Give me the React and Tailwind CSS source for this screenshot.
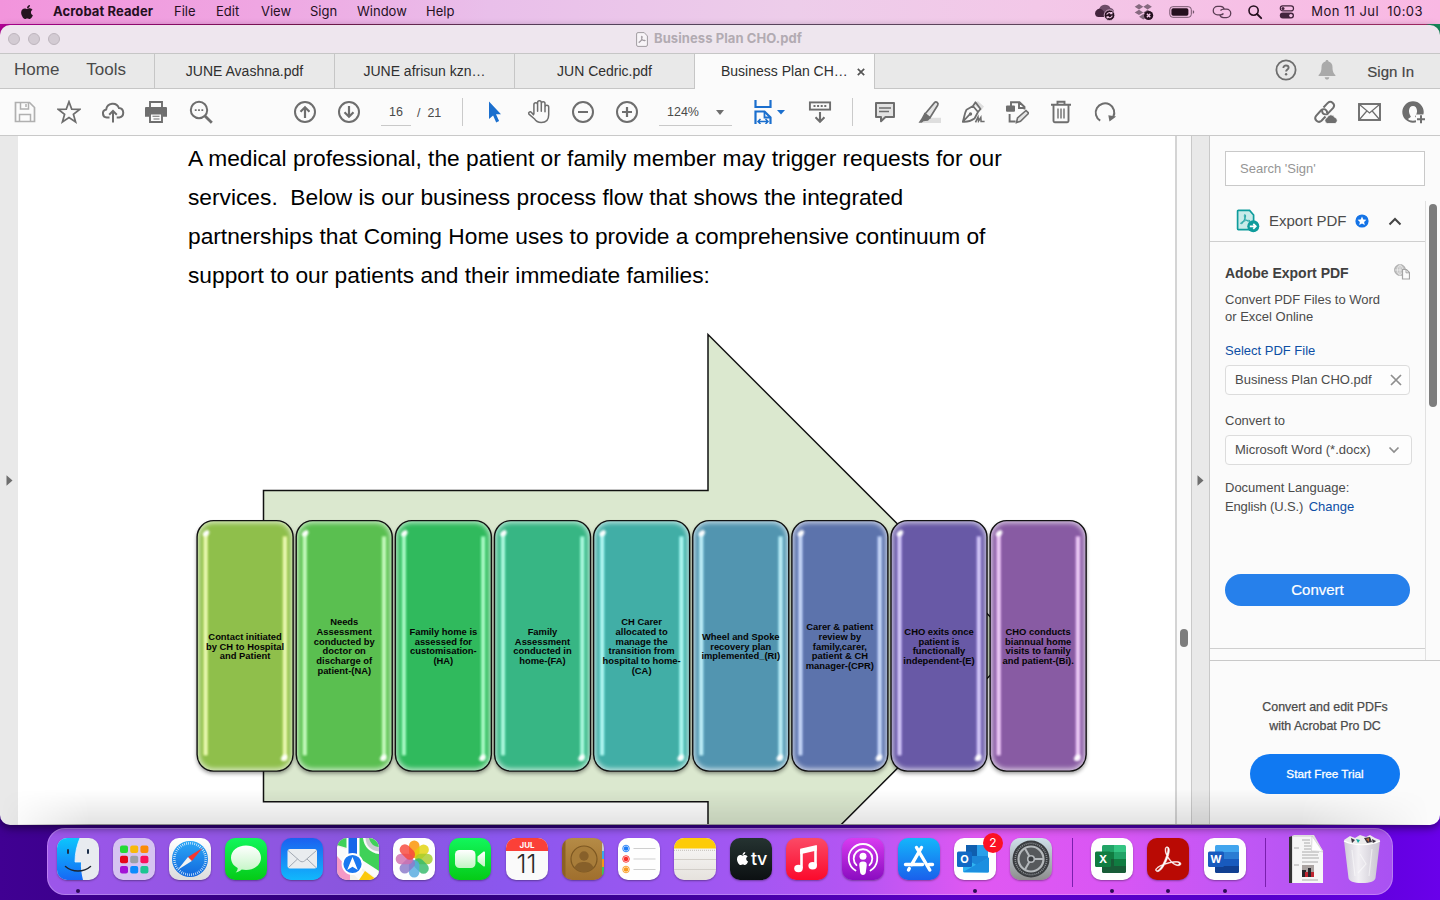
import React from "react";
import { FaApple } from "react-icons/fa";

const G = "#6e6e6e";

function Svg({ size = 24, w, h, vb = "0 0 24 24", children, className = "" }) {
  return (
    <svg width={w || size} height={h || size} viewBox={vb} fill="none" className={"shrink-0 " + className}>
      {children}
    </svg>
  );
}

const ACRO =
  "M23.63 15.3c-.71-.745-2.166-1.17-4.224-1.17-1.1 0-2.377.106-3.761.354a19.443 19.443 0 0 1-2.307-2.661c-.532-.71-.994-1.49-1.42-2.236.817-2.484 1.207-4.507 1.207-5.962 0-1.632-.603-3.336-2.342-3.336-.532 0-1.065.32-1.349.781-.78 1.384-.425 4.4.923 7.381a60.277 60.277 0 0 1-1.703 4.507c-.568 1.349-1.207 2.733-1.917 4.01C2.834 18.53.314 20.34.03 21.758c-.106.533.071 1.03.462 1.42.142.107.639.533 1.49.533 2.59 0 5.323-4.188 6.707-6.707 1.065-.355 2.13-.71 3.194-.994a34.963 34.963 0 0 1 3.407-.745c2.732 2.448 5.145 2.839 6.352 2.839 1.49 0 2.023-.604 2.2-1.1.32-.64.106-1.349-.213-1.704zm-1.42 1.03c-.107.532-.64.887-1.384.887-.213 0-.39-.036-.604-.071-1.348-.32-2.626-.994-3.903-2.059a17.717 17.717 0 0 1 2.98-.248c.746 0 1.385.035 1.81.142.497.106 1.278.426 1.1 1.348zm-7.524-1.668a38.01 38.01 0 0 0-2.945.674 39.68 39.68 0 0 0-2.52.745 40.05 40.05 0 0 0 1.207-2.555c.426-.994.78-2.023 1.136-2.981.354.603.745 1.207 1.135 1.739a50.127 50.127 0 0 0 1.987 2.378zM10.038 1.46a.768.768 0 0 1 .674-.425c.745 0 .887.851.887 1.526 0 1.135-.355 2.874-.958 4.861-1.03-2.768-1.1-5.074-.603-5.962zM6.134 17.997c-1.81 2.981-3.549 4.826-4.613 4.826a.872.872 0 0 1-.532-.177c-.213-.213-.32-.461-.249-.745.213-1.065 2.271-2.555 5.394-3.904Z";

/* ---------- menu bar ---------- */

function MenuBar() {
  return (
    <div className="flex h-6 w-full shrink-0 items-center bg-[linear-gradient(90deg,#f294dc_0%,#efa6e2_18%,#e9bfea_34%,#edcdea_55%,#f3c8e8_72%,#f9b8e3_100%)] text-[13px] text-[#25101f]">
      <span className="flex w-[53px] shrink-0 justify-center">
        <FaApple size={16} className="text-[#25151f]" />
      </span>
      <span className="w-[121px] font-bold tracking-[0.1px]">Acrobat Reader</span>
      <span className="w-[42px]">File</span>
      <span className="w-[45px]">Edit</span>
      <span className="w-[49px]">View</span>
      <span className="w-[47px]">Sign</span>
      <span className="w-[69px]">Window</span>
      <span>Help</span>
      <span className="ml-auto flex items-center">
        <Svg w={22} h={18} vb="0 0 22 18" className="mr-[18px]">
          <path d="M6 14a4.5 4.5 0 0 1-.6-8.6A6.2 6.2 0 0 1 16.500 5A4.500 4.500 0 0 1 20 9.500c0 3-2 4.500-4.500 4.500Z" fill="#6d4d68" />
          <path d="M1 10.500A4.500 4.500 0 0 1 8 6.600L15 14H5.400A4 4 0 0 1 1 10.500Z" fill="#43243d" />
          <circle cx="15.500" cy="12.200" r="5.300" fill="#25101f" stroke="#f3c8e8" strokeWidth=".8" />
          <path d="M12.700 11.700a3 3 0 0 1 5-1.200M18.300 12.700a3 3 0 0 1-5 1.200M17.900 8.900v1.800h-1.800M13.100 15.500v-1.800h1.800" stroke="#f3c8e8" strokeWidth="1.100" />
        </Svg>
        <Svg w={20} h={18} vb="0 0 20 18" className="mr-[15px]">
          <g fill="#85697f">
            <path d="m5 1 4.300 2.700L5 6.400.7 3.700ZM13.600 1l4.300 2.700-4.300 2.700-4.300-2.700ZM5 6.700l4.300 2.700L5 12.100.7 9.400ZM13.600 6.700l4.300 2.700-4.300 2.700-4.300-2.700ZM9.300 11l4.200 2.700-4.200 2.700-4.200-2.700Z" />
          </g>
          <circle cx="14.600" cy="12.500" r="4.600" fill="#25101f" />
          <path d="m12.900 10.800 3.400 3.400m0-3.400-3.400 3.400" stroke="#f3c8e8" strokeWidth="1.400" />
        </Svg>
        <Svg w={26} h={12} vb="0 0 26 12" className="mr-[17px]">
          <rect x=".8" y=".7" width="21.500" height="10.600" rx="3" stroke="#75566d" strokeWidth="1" />
          <rect x="2.400" y="2.300" width="17" height="7.400" rx="1.700" fill="#25101f" />
          <path d="M23.800 4.200c1 .3 1.400 1 1.400 1.800s-.4 1.500-1.400 1.800Z" fill="#75566d" />
        </Svg>
        <Svg w={20} h={14} vb="0 0 20 14" className="mr-[15px]">
          <path d="M11.500 8.500c-.8 1-2 1.400-3.400 1.400H5.500a4.200 4.200 0 0 1 0-8.500h3a4.200 4.200 0 0 1 3.900 3.200M8.500 5.500c.8-1 2-1.400 3.400-1.400h2.600a4.200 4.200 0 0 1 0 8.500h-3a4.200 4.200 0 0 1-3.900-3.200" stroke="#5b3d54" strokeWidth="1.300" />
        </Svg>
        <Svg w={16} h={16} vb="0 0 16 16" className="mr-[16px]">
          <circle cx="6.600" cy="6.600" r="4.600" stroke="#25101f" strokeWidth="1.600" />
          <path d="m10 10 4.200 4.200" stroke="#25101f" strokeWidth="1.900" strokeLinecap="round" />
        </Svg>
        <Svg w={16} h={14} vb="0 0 16 14" className="mr-[16px]">
          <rect x="1.300" y=".9" width="13.200" height="5" rx="2.500" stroke="#43243d" strokeWidth="1.200" />
          <circle cx="4" cy="3.400" r="1.500" fill="#43243d" />
          <rect x=".8" y="7.600" width="14.200" height="6" rx="3" fill="#43243d" />
          <circle cx="11.900" cy="10.600" r="1.700" fill="#f5c0e6" />
        </Svg>
        <span className="mr-[17px] whitespace-pre tracking-[0.450px]">Mon 11 Jul  10:03</span>
      </span>
    </div>
  );
}

/* ---------- window chrome ---------- */

function TitleBar() {
  return (
    <div className="flex h-7 shrink-0 items-center bg-[#eee6ee]">
      <div className="flex w-[200px] gap-2 pl-2">
        <i className="size-3 rounded-full border border-[#bdb5bd] bg-[#d3cbd3]" />
        <i className="size-3 rounded-full border border-[#bdb5bd] bg-[#d3cbd3]" />
        <i className="size-3 rounded-full border border-[#bdb5bd] bg-[#d3cbd3]" />
      </div>
      <div className="flex flex-1 items-center justify-center gap-[6px] pr-[202px]">
        <Svg w={12} h={15} vb="0 0 12 15">
          <path d="M2 .6h6.200L11.400 4v9a1.400 1.400 0 0 1-1.400 1.400H2A1.400 1.400 0 0 1 .6 13V2A1.400 1.400 0 0 1 2 .6Z" fill="#f8f4f8" stroke="#a29ca2" />
          <path d={ACRO} transform="translate(2.700 4) scale(.28)" fill="#8d878d" stroke="#8d878d" strokeWidth="1" />
        </Svg>
        <span className="text-[13px] font-bold tracking-[0.080px] text-[#b2abb2]">Business Plan CHO.pdf</span>
      </div>
    </div>
  );
}

function Tab({ children }) {
  return (
    <div className="flex w-[180px] items-center justify-center border-b border-l border-[#c6c6c6] text-[14px] text-[#2f2f2f]">
      {children}
    </div>
  );
}

function TabRow() {
  return (
    <div className="flex h-9 shrink-0 border-t border-[#c6c6c6] bg-[#e9e9e9] font-['Liberation_Sans',Arial,sans-serif]">
      <div className="flex w-[154px] gap-[27px] border-b border-[#c6c6c6] pt-[4px] pl-[14px] text-[17px] leading-6 text-[#4a4a4a]">
        <span>Home</span>
        <span>Tools</span>
      </div>
      <Tab>JUNE Avashna.pdf</Tab>
      <Tab>JUNE afrisun kzn…</Tab>
      <Tab>JUN Cedric.pdf</Tab>
      <div className="flex w-[181px] items-center border-x border-[#c6c6c6] bg-[#fbfbfb] pl-[26px] text-[14px] text-[#2f2f2f]">
        <span className="w-[136px]">Business Plan CH…</span>
        <Svg size={8} vb="0 0 8 8">
          <path d="m.8.8 6.400 6.400M7.200.8.8 7.200" stroke="#555" strokeWidth="1.700" />
        </Svg>
      </div>
      <div className="flex flex-1 items-center justify-end border-b border-[#c6c6c6] pr-[26px]">
        <Svg size={22} vb="0 0 22 22" className="mr-[21px] -mt-[3px]">
          <circle cx="11" cy="11" r="9.600" stroke={G} strokeWidth="1.800" />
          <path d="M8.400 8.900c0-1.500 1.100-2.400 2.600-2.400s2.600.9 2.600 2.200c0 1.900-2.500 1.900-2.500 3.900" stroke={G} strokeWidth="1.900" />
          <circle cx="11.100" cy="15.200" r="1.200" fill={G} />
        </Svg>
        <Svg w={18} h={20} vb="0 0 18 20" className="mr-[31px] -mt-[2px]">
          <path d="M9 0c.9 0 1.500.6 1.500 1.500 2.600.6 4 2.700 4 5.500 0 4.800 1.200 6.500 2.900 8v1H.6v-1c1.700-1.500 2.900-3.200 2.900-8 0-2.800 1.400-4.900 4-5.500C7.500.6 8.100 0 9 0ZM6.700 17.300h4.600C11.100 18.800 10.200 19.600 9 19.600s-2.100-.8-2.300-2.300Z" fill="#aaa" />
        </Svg>
        <span className="mt-[2px] text-[15px] text-[#454545] [-webkit-text-stroke:0.200px_#454545]">Sign In</span>
      </div>
    </div>
  );
}

function Slot({ children }) {
  return <div className="flex w-11 shrink-0 items-center justify-center">{children}</div>;
}

function Toolbar() {
  return (
    <div className="flex h-[47px] shrink-0 items-center border-b border-[#c9c9c9] bg-[#fbfbfb] pl-[3px] font-['Liberation_Sans',Arial,sans-serif] text-[13px] text-[#4a4a4a]">
      <Slot>
        <Svg>
          <path d="M3 3h14l5 5v14H3Z" transform="translate(-.5 -.5)" stroke="#b0b0b0" strokeWidth="1.700" />
          <path d="M7.500 3v6h8V3M6.500 21v-6.500h11V21M13 4v3" stroke="#b0b0b0" strokeWidth="1.500" />
        </Svg>
      </Slot>
      <Slot>
        <Svg>
          <path d="m12 1.700 2.700 7.400 7.900.3-6.200 4.900 2.200 7.600L12 17.500l-6.600 4.400 2.200-7.600-6.200-4.900 7.900-.3Z" stroke={G} strokeWidth="1.700" />
        </Svg>
      </Slot>
      <Slot>
        <Svg>
          <path d="M8.500 17.500H5.700a4.100 4.100 0 0 1-.5-8.100A6.600 6.600 0 0 1 17.900 8a4.800 4.800 0 0 1 .4 9.500h-2.600" stroke={G} strokeWidth="2" />
          <path d="M12 22.500V11m-3.800 3.700L12 10.900l3.800 3.800" stroke={G} strokeWidth="2" />
        </Svg>
      </Slot>
      <Slot>
        <Svg className="-ml-[2px]">
          <path d="M6 7.500V2h12v5.500" stroke={G} strokeWidth="1.900" />
          <path d="M2 7h20a1 1 0 0 1 1 1v8.800h-4.200V13H5.200v3.800H1V8a1 1 0 0 1 1-1Z" fill={G} />
          <path d="M6 13.500h12V22H6Z" fill="#fbfbfb" stroke={G} strokeWidth="1.900" />
          <path d="M8.500 16.200h7m-6 2.800h6" stroke={G} strokeWidth="1.100" />
        </Svg>
      </Slot>
      <Slot>
        <Svg>
          <circle cx="10" cy="10" r="8.200" stroke={G} strokeWidth="2" />
          <path d="m16 16 6.800 6.800" stroke={G} strokeWidth="2.800" />
          <path d="M5.800 9.200h1.800v1.800H5.800Zm3.300 0h1.800v1.800H9.100Zm3.300 0h1.800v1.800h-1.800Z" fill={G} />
        </Svg>
      </Slot>
      <div className="w-[60px] shrink-0" />
      <Slot>
        <Svg>
          <circle cx="12" cy="12" r="10" stroke={G} strokeWidth="2" />
          <path d="M12 18V7m-4.500 4.700L12 7.200l4.500 4.500" stroke={G} strokeWidth="2.200" />
        </Svg>
      </Slot>
      <Slot>
        <Svg>
          <circle cx="12" cy="12" r="10" stroke={G} strokeWidth="2" />
          <path d="M12 6v11m-4.500-4.700 4.500 4.500 4.500-4.500" stroke={G} strokeWidth="2.200" />
        </Svg>
      </Slot>
      <div className="mt-[1px] ml-[10px] h-[27px] w-[30px] border-b border-[#c9c9c9] text-center text-[12.500px] leading-[26px]">16</div>
      <div className="mt-[2px] ml-[6px] w-[45px] whitespace-pre text-[12.500px]">/  21</div>
      <div className="mr-[10px] h-7 w-px bg-[#cacaca]" />
      <Slot>
        <Svg>
          <path d="M6 1.500 18 14.300h-5l3.100 6.800-2.900 1.300-3.100-6.900L6 19Z" fill="#1b6fce" />
        </Svg>
      </Slot>
      <Slot>
        <Svg>
          <path d="M6.600 14.500V5a1.850 1.850 0 0 1 3.700 0v6.500V3a1.850 1.850 0 0 1 3.700 0v8.500V4a1.850 1.850 0 0 1 3.700 0v8V7.500a1.850 1.850 0 0 1 3.700 0V15c0 5-3 7.800-7.400 7.800-3.500 0-5.500-1.200-7-3.800L1.600 14.400c-1-1.800 1.200-3.200 2.600-1.700l2.400 2.900" stroke={G} strokeWidth="1.500" strokeLinejoin="round" transform="translate(.3 -.3)" />
        </Svg>
      </Slot>
      <Slot>
        <Svg>
          <circle cx="12" cy="12" r="10" stroke={G} strokeWidth="2" />
          <path d="M7 12h10" stroke={G} strokeWidth="2.200" />
        </Svg>
      </Slot>
      <Slot>
        <Svg>
          <circle cx="12" cy="12" r="10" stroke={G} strokeWidth="2" />
          <path d="M7 12h10M12 7v10" stroke={G} strokeWidth="2.200" />
        </Svg>
      </Slot>
      <div className="mt-[1px] ml-[10px] flex h-[27px] w-[73px] items-start justify-between border-b border-[#c9c9c9] pr-[8px] pl-[8px] text-[12.500px] leading-[26px]">
        124%
        <Svg w={8} h={5} vb="0 0 8 5" className="mt-[11px]">
          <path d="M0 0h8L4 5Z" fill={G} />
        </Svg>
      </div>
      <div className="flex w-[66px] shrink-0 items-center justify-center gap-[4px] pl-[8px]">
        <Svg w={20} h={24} vb="0 0 20 24">
          <g stroke="#1b6fce" strokeWidth="2.200">
            <path d="M2.500 0v7h15V0M2.500 24V11.500h9l6 6V24" />
            <path d="M11.500 11.500v6h6" strokeWidth="1.800" />
            <path d="M5 21.500h10M7.500 19 5 21.500 7.500 24m5-5 2.500 2.500-2.500 2.500" strokeWidth="1.500" />
          </g>
        </Svg>
        <Svg w={8} h={5} vb="0 0 8 5">
          <path d="M0 0h8L4 4.600Z" fill="#1b6fce" />
        </Svg>
      </div>
      <Slot>
        <Svg>
          <rect x="1.900" y="2.400" width="20.200" height="7.200" stroke={G} strokeWidth="1.900" />
          <path d="M5.500 6h13" stroke={G} strokeWidth="2" strokeDasharray="2 1.600" />
          <path d="M12 12v10m-4.500-4.700L12 21.800l4.500-4.500" stroke={G} strokeWidth="2.100" />
        </Svg>
      </Slot>
      <div className="mx-[10px] h-7 w-px bg-[#cacaca]" />
      <Slot>
        <Svg>
          <path d="M3 3h18v14h-8.500L8 21.300V17H3Z" fill="#e3e3e3" stroke={G} strokeWidth="2" strokeLinejoin="round" />
          <path d="M6 8h12M6 11.500h10" stroke={G} strokeWidth="1.500" />
        </Svg>
      </Slot>
      <Slot>
        <Svg>
          <path d="M6 17.800h18V23H5Z" fill="#dedede" />
          <path d="m8 14 9.500-11.400c1.700-1.700 4.500.5 3.200 2.600L12.800 18Z" fill="#e3e3e3" stroke={G} strokeWidth="1.700" />
          <path d="m7.600 12.400 6.400 5-3 3.300-4.500.5-1.700 1.500H1.500l3.200-4.600Z" fill={G} />
        </Svg>
      </Slot>
      <Slot>
        <Svg>
          <path d="m13.500 5 3.200-4 6.300 5.500-3 4Z" fill="#dedede" />
          <path d="M14.500 2.300 12 6 5.500 9.700C3.500 13 3.500 17 1.800 21.800c5 .4 8.500-1 11.700-3.300L17 12l2.500-3Z M12 6l5 6M2 21.500l6.500-6.800" stroke={G} strokeWidth="1.800" strokeLinejoin="round" />
          <circle cx="9.500" cy="14" r="1.700" fill={G} />
          <path d="M14.500 22.300 17 17l.5 4 2.300-3.500.3 4h3.500" stroke={G} strokeWidth="1.600" />
        </Svg>
      </Slot>
      <Slot>
        <Svg>
          <path d="M6 6V2.200h8.500L19.500 7v2.500M14 2.200V8h5.500" stroke={G} strokeWidth="1.900" />
          <rect x="1" y="5.500" width="9" height="6.200" rx="1" fill={G} />
          <path d="M4.600 14v7.500h6" stroke={G} strokeWidth="1.900" />
          <path d="M11.500 22.500 12.500 18 21 10.500l2.700 2.700-8.200 8.100Z" fill="#e3e3e3" stroke={G} strokeWidth="1.600" />
        </Svg>
      </Slot>
      <Slot>
        <Svg>
          <path d="M4.500 5.500V21a1.200 1.200 0 0 0 1.200 1.200h12.600a1.200 1.200 0 0 0 1.200-1.200V5.500M2 4.700h20M8.500 4V1.800h7V4" stroke={G} strokeWidth="1.900" />
          <path d="M9 8.500v10M12 8.500v10M15 8.500v10" stroke={G} strokeWidth="1.400" />
        </Svg>
      </Slot>
      <Slot>
        <Svg>
          <path d="M7.200 20.600A9.300 9.300 0 1 1 20.200 17" stroke={G} strokeWidth="2" />
          <path d="M15.300 15.200 23.200 16.500l-6.700 5Z" fill={G} />
        </Svg>
      </Slot>
      <div className="ml-auto flex pr-[5px]">
        <Slot>
          <Svg size={25} vb="0 0 25 25">
            <g stroke={G} strokeWidth="2">
              <path d="m10.500 7.500 4.300-4.600a3.700 3.700 0 0 1 5.400 5L15 13.400a3.700 3.700 0 0 1-5.200-.2 3.700 3.700 0 0 1-.4-3.200" />
              <path d="m12.500 16.500-4 4.300a3.700 3.700 0 0 1-5.400-5l5-5.500a3.700 3.700 0 0 1 5.200.1c.7.800 1 2 .6 3" />
            </g>
            <path d="M14.500 23.500a3 3 0 0 1-.4-5.900 4 4 0 0 1 7.500-.3 3.200 3.200 0 0 1 .5 6.200Z" fill={G} stroke="#fbfbfb" strokeWidth=".8" />
          </Svg>
        </Slot>
        <Slot>
          <Svg>
            <rect x="2" y="4" width="21" height="16" stroke={G} strokeWidth="1.900" />
            <path d="m2.500 4.500 10 8.500 10-8.500M2.500 19.500 9.800 11m12.700 8.500L15.200 11" stroke={G} strokeWidth="1.200" />
          </Svg>
        </Slot>
        <Slot>
          <Svg size={25} vb="0 0 25 25">
            <circle cx="12" cy="12" r="9.700" stroke={G} strokeWidth="2" />
            <path d="M12 2a10 10 0 0 0-9 14.500C4 18.500 5.500 19.500 6.500 20c0-1.500 3-2 3.300-3.300.1-.9-1.600-2-1.800-5C7.800 8 9.500 6 12 6s4.200 2 4 5.700c-.2 3-1.900 4.100-1.800 5l.8.700 7-3.900A10 10 0 0 0 12 2Z" fill={G} />
            <path d="M15 14.500h10V25H15Z" fill="#fbfbfb" />
            <path d="M16 19.300h8m-4-4v8" stroke={G} strokeWidth="2" />
          </Svg>
        </Slot>
      </div>
    </div>
  );
}

/* ---------- document ---------- */

const CARDS = [
  { c: "#8fbf4b", g: "#eeff9c", t: ["Contact initiated", "by CH to Hospital", "and Patient"] },
  { c: "#5abf50", g: "#b8ffae", t: ["Needs", "Assessment", "conducted by", "doctor on", "discharge of", "patient-(NA)"] },
  { c: "#30ba5d", g: "#8fffb8", t: ["Family home is", "assessed for", "customisation-", "(HA)"] },
  { c: "#37b684", g: "#96ffdc", t: ["Family", "Assessment", "conducted in", "home-(FA)"] },
  { c: "#41aea6", g: "#9bfff8", t: ["CH Carer", "allocated to", "manage the", "transition from", "hospital to home-", "(CA)"] },
  { c: "#5295b0", g: "#b0f4ff", t: ["Wheel and Spoke", "recovery plan", "implemented_(RI)"] },
  { c: "#5c73ac", g: "#bdd3ff", t: ["Carer & patient", "review by", "family,carer,", "patient & CH", "manager-(CPR)"] },
  { c: "#6859a6", g: "#cdbcff", t: ["CHO exits once", "patient is", "functionally", "independent-(E)"] },
  { c: "#885ba3", g: "#f4c4ff", t: ["CHO conducts", "biannual home", "visits to family", "and patient-(Bi)."] },
];

function FlowDiagram() {
  return (
    <svg width="1157" height="530" viewBox="18 295 1157 530" className="block shrink-0 font-['Liberation_Sans',Arial,sans-serif]">
      <defs>
        <filter id="soft" x="-20%" y="-20%" width="140%" height="140%">
          <feGaussianBlur stdDeviation="2.600" />
        </filter>
        <filter id="line" filterUnits="userSpaceOnUse" x="-5" y="-5" width="110" height="265">
          <feGaussianBlur stdDeviation="0.800" />
        </filter>
        <filter id="shade" x="-20%" y="-10%" width="140%" height="120%">
          <feGaussianBlur stdDeviation="2" />
        </filter>
        <clipPath id="cardClip">
          <rect x="0.500" y="0" width="96" height="251" rx="17" />
        </clipPath>
      </defs>
      <path d="M263.500 490.400H708V334.500L1019.500 646 708 958V801.800H263.500Z" fill="#dbe8cf" stroke="#111" strokeWidth="1.500" />
      {CARDS.map((k, i) => {
        const first = 649.6 - ((k.t.length - 1) / 2) * 9.75;
        return (
          <g key={i}>
            <g transform={`translate(${196.6 + i * 99.13} 520.3)`}>
              <rect x="0.500" y="3" width="96" height="250" rx="16" fill="#000" opacity=".45" filter="url(#shade)" />
              <rect x="0.500" y="0.300" width="96" height="250.500" rx="16.500" fill={k.c} />
              <g clipPath="url(#cardClip)">
                <rect x="0" y="0" width="97" height="251" rx="17" stroke="#fff" strokeWidth="5" fill="none" opacity=".75" filter="url(#soft)" />
                <path d="M9 13V235M88.300 16V240" stroke={k.g} strokeWidth="4.500" opacity=".8" filter="url(#line)" />
                <path d="M9 12V235M88.300 17V240" stroke="#fff" strokeWidth="1.600" opacity=".6" filter="url(#line)" />
                <ellipse cx="9.600" cy="13" rx="3.600" ry="2.400" transform="rotate(-45 9.600 13)" fill="#fff" filter="url(#line)" />
                <ellipse cx="87.600" cy="237.500" rx="3.600" ry="2.400" transform="rotate(-45 87.600 237.500)" fill="#fff" filter="url(#line)" />
              </g>
              <rect x="0.500" y="0.300" width="96" height="250.500" rx="16.500" fill="none" stroke="#111" strokeWidth="1.400" />
            </g>
            {k.t.map((line, j) => (
              <text key={j} x={245.1 + i * 99.13} y={first + j * 9.75} textAnchor="middle" fontSize="9.400" fontWeight="700" fill="#050505">
                {line}
              </text>
            ))}
          </g>
        );
      })}
    </svg>
  );
}

function Document() {
  return (
    <div className="flex w-[1157px] shrink-0 flex-col overflow-hidden bg-white pt-[3px] font-['Liberation_Sans',Arial,sans-serif]">
      <div className="shrink-0 pl-[170px] text-[22.740px] leading-[39px] whitespace-pre text-black">
        <p>A medical professional, the patient or family member may trigger requests for our</p>
        <p>services.  Below is our business process flow that shows the integrated</p>
        <p>partnerships that Coming Home uses to provide a comprehensive continuum of</p>
        <p>support to our patients and their immediate families:</p>
      </div>
      <FlowDiagram />
    </div>
  );
}

/* ---------- side panel ---------- */

function SidePanel() {
  return (
    <div className="flex flex-1 flex-col bg-[#fbfbfb] font-['Liberation_Sans',Arial,sans-serif] text-[13px] text-[#4b4b4b]">
      <div className="mx-[15px] mt-[15px] flex h-[35px] shrink-0 items-center border border-[#c9c9c9] bg-white pl-[14px] text-[#959595]">Search 'Sign'</div>
      <div className="mt-[15px] flex h-[459px] shrink-0">
        <div className="flex w-[216px] flex-col border-r border-[#e1e1e1]">
          <div className="flex h-[41px] shrink-0 items-center border-b border-[#cfcfcf] pl-[26px]">
            <Svg w={24} h={24} vb="0 0 24 24">
              <path d="M2.400 1.400h11.200L17.600 6v14.600H2.400a.8.800 0 0 1-.8-.8V2.200a.8.800 0 0 1 .8-.8Z" fill="#c9ebe9" stroke="#0e9c9c" strokeWidth="1.700" />
              <path d={ACRO} transform="translate(4.500 5.500) scale(.4)" fill="#0e9c9c" stroke="#0e9c9c" strokeWidth=".8" />
              <circle cx="17.300" cy="17.300" r="6" fill="#0e9c9c" />
              <path d="M13.800 17.300h5.500m-2-2.500 2.500 2.500-2.500 2.500" stroke="#fff" strokeWidth="1.700" />
            </Svg>
            <span className="ml-[9px] w-[86px] text-[15px]">Export PDF</span>
            <Svg w={14} h={14} vb="0 0 14 14">
              <circle cx="7" cy="7" r="6.600" fill="#1473e6" />
              <path d="m7 2.600 1.300 2.900 3.100.3-2.300 2.100.7 3.100L7 9.400 4.200 11l.7-3.100-2.300-2.100 3.100-.3Z" fill="#fff" />
            </Svg>
            <Svg w={14} h={9} vb="0 0 14 9" className="ml-[19px]">
              <path d="m1.500 7.500 5.500-5.500 5.500 5.500" stroke="#444" strokeWidth="2" />
            </Svg>
          </div>
          <div className="flex flex-1 flex-col pl-[15px]">
            <div className="mt-[21px] flex h-5 shrink-0 items-center justify-between pr-[15px]">
              <span className="text-[14px] font-bold text-[#404040]">Adobe Export PDF</span>
              <Svg w={16} h={16} vb="0 0 16 16" className="-mt-[2px]">
                <circle cx="6" cy="6" r="5.400" fill="#c4c4c4" stroke="#a5a5a5" />
                <path d="M.6 6h10.800M6 .6v10.800M6 .6c-3.500 3-3.500 7.800 0 10.800M6 .6c3.500 3 3.500 7.800 0 10.800" stroke="#f4f4f4" strokeWidth=".7" />
                <path d="M8.500 5.500h4l3 3v6.500h-7Z" fill="#fbfbfb" stroke="#a5a5a5" strokeWidth="1.200" />
                <path d="M12 5.500v3.300h3.300" stroke="#a5a5a5" />
              </Svg>
            </div>
            <p className="mt-2 leading-[17px]">Convert PDF Files to Word<br />or Excel Online</p>
            <span className="mt-[17px] leading-[18px] text-[#0d4fa5]">Select PDF File</span>
            <div className="mt-[5px] flex h-[30px] w-[185px] shrink-0 items-center justify-between rounded-[4px] border border-[#dcdcdc] bg-[#fdfdfd] pr-[7px] pl-[9px]">
              Business Plan CHO.pdf
              <Svg w={12} h={12} vb="0 0 12 12">
                <path d="m1 1 10 10M11 1 1 11" stroke="#8e8e8e" strokeWidth="1.700" />
              </Svg>
            </div>
            <span className="mt-4 leading-5">Convert to</span>
            <div className="mt-1 flex h-[30px] w-[187px] shrink-0 items-center justify-between rounded-[4px] border border-[#dcdcdc] bg-[#fdfdfd] pr-[11px] pl-[9px]">
              Microsoft Word (*.docx)
              <Svg w={12} h={8} vb="0 0 12 8">
                <path d="m1.500 1.500 4.500 4.500 4.500-4.500" stroke="#8e8e8e" strokeWidth="1.700" />
              </Svg>
            </div>
            <p className="mt-[13px] leading-[19px]">
              Document Language:<br /><span className="tracking-[-0.150px]">English (U.S.)</span> <span className="ml-[2px] text-[#0d4fa5]">Change</span>
            </p>
            <div className="mt-[58px] flex h-8 w-[185px] shrink-0 items-center justify-center rounded-full bg-[#2680eb] text-[15px] text-white [-webkit-text-stroke:0.200px_white]">Convert</div>
          </div>
          <div className="h-[12px] shrink-0 border-t border-[#cfcfcf]" />
        </div>
        <div className="flex-1 pt-[3px] pl-[3px]">
          <div className="h-[203px] w-2 rounded-full bg-[#7d7d7d]" />
        </div>
      </div>
      <div className="flex flex-1 flex-col items-center border-t border-[#c9c9c9] pt-[37px]">
        <p className="text-center text-[12.400px] leading-[19px] [-webkit-text-stroke:0.250px_#4b4b4b]">Convert and edit PDFs<br />with Acrobat Pro DC</p>
        <div className="mt-[18px] flex h-10 w-[150px] shrink-0 items-center justify-center rounded-full bg-[#1079f2] text-[11.700px] text-white [-webkit-text-stroke:0.300px_white]">Start Free Trial</div>
      </div>
    </div>
  );
}

function Handle() {
  return (
    <Svg w={7} h={11} vb="0 0 7 11" className="-mt-[1px]">
      <path d="M.5.300 6.500 5.500.500 10.700Z" fill={G} />
    </Svg>
  );
}

function AcrobatWindow() {
  return (
    <div className="relative flex h-[800px] w-full shrink-0 flex-col overflow-hidden rounded-[10px] shadow-[0_3px_8px_rgba(0,0,0,0.5)]">
      <TitleBar />
      <TabRow />
      <Toolbar />
      <div className="flex min-h-0 flex-1">
        <div className="flex w-[18px] shrink-0 items-center justify-center bg-[#e9e9e9]"><Handle /></div>
        <Document />
        <div className="flex w-[16px] shrink-0 justify-center border-l-2 border-[#d4d4d4] bg-[#fafafa]">
          <div className="mt-[493px] h-[18px] w-2 rounded-full bg-[#7d7d7d]" />
        </div>
        <div className="flex w-[19px] shrink-0 items-center justify-center border-x border-[#c9c9c9] bg-[#e9e9e9]"><Handle /></div>
        <SidePanel />
      </div>
      <div className="pointer-events-none absolute inset-x-0 bottom-0 h-9 border-b border-[#8a8a8a] bg-[linear-gradient(180deg,rgba(0,0,0,0),rgba(0,0,0,0.110))] [mask-image:linear-gradient(90deg,transparent_0,black_90px,black_1300px,transparent_1430px)]" />
    </div>
  );
}

/* ---------- dock ---------- */

function App42({ bg, children, dot, badge }) {
  return (
    <div className="relative flex h-full w-14 shrink-0 flex-col items-center pt-[9px]">
      <div className="relative size-[42px] overflow-hidden rounded-[10px] shadow-[0_1px_2px_rgba(0,0,0,0.350)]" style={{ background: bg }}>
        {children}
      </div>
      {dot && <i className="mt-[9px] size-1 rounded-full bg-[#2b0a55]" />}
      {badge && (
        <span className="absolute top-[4px] left-[36px] flex size-5 items-center justify-center rounded-full bg-[#fb1124] text-[12px] text-white">{badge}</span>
      )}
    </div>
  );
}

const A = ({ children }) => (
  <svg width="42" height="42" viewBox="0 0 42 42" fill="none" className="block font-['Inter',sans-serif]">{children}</svg>
);

const PAD = ["#23d936", "#f8b90c", "#fb8b08", "#e6061b", "#9aa0a8", "#f9105c", "#a212d6", "#0b8bfd", "#1cc593"];
const PETALS = ["#fb9200", "#e2d30a", "#a7cc2b", "#33b96a", "#54a9df", "#8a79c9", "#cf6fae", "#f6473b"];

function OfficeTile({ letter, dark, rows }) {
  return (
    <A>
      <defs><clipPath id={"o" + letter}><rect x="11" y="7" width="24" height="28" rx="1.500" /></clipPath></defs>
      <g clipPath={`url(#o${letter})`}>
        {rows.map((c, i) => <rect key={i} x={c[1]} y={7 + c[0] * 7} width={c[2]} height="7.200" fill={c[3]} />)}
      </g>
      <rect x="4" y="13.500" width="16" height="15.500" rx="1.500" fill={dark} />
      <text x="12" y="25" textAnchor="middle" fontSize="11" fontWeight="700" fill="#fff">{letter}</text>
    </A>
  );
}

function Dock() {
  return (
    <div className="mx-auto flex h-[67px] w-[1346px] shrink-0 rounded-[18px] border border-white/25 bg-[linear-gradient(90deg,#9c56ea_0%,#8a56de_22%,#8b57ee_34%,#a357f2_52%,#b455f3_60%,#e058f2_69%,#d956f4_79%,#c257f5_88%,#a952f2_100%)] pl-[2px] font-['Inter',sans-serif]">
      <App42 bg="#e8ebf0" dot>
        <A>
          <defs><linearGradient id="fi" x1="0" y1="0" x2="0" y2="1"><stop stopColor="#0cc6fd" /><stop offset="1" stopColor="#1668f5" /></linearGradient></defs>
          <path d="M0 0h23c-3 7-5 15-5 24h6c-.5 6 .5 12 2 18H0Z" fill="url(#fi)" />
          <path d="M23 0c-3 7-5 15-5 24h6" stroke="#e8f4ff" strokeWidth=".8" />
          <path d="M11 12v3M31 12v3" stroke="#1a2e4a" strokeWidth="2" strokeLinecap="round" />
          <path d="M8.500 28.500c7 6 18 6 25 0" stroke="#1d2430" strokeWidth="1.500" strokeLinecap="round" />
        </A>
      </App42>
      <App42 bg="#d6c3f1">
        <A>{PAD.map((c, i) => <rect key={i} x={7 + (i % 3) * 10.2} y={7.500 + Math.floor(i / 3) * 10.2} width="8" height="7.500" rx="2" fill={c} />)}</A>
      </App42>
      <App42 bg="linear-gradient(#ffffff,#dcdcdc)">
        <A>
          <defs><linearGradient id="sf" x1="0" y1="0" x2="0" y2="1"><stop stopColor="#2ba7f6" /><stop offset="1" stopColor="#1167dd" /></linearGradient></defs>
          <circle cx="21" cy="21" r="18" fill="url(#sf)" />
          <circle cx="21" cy="21" r="15.700" stroke="#e8f5ff" strokeWidth="2.500" strokeDasharray=".7 1.350" />
          <path d="M33.500 10 22.800 23 19 19Z" fill="#f7362f" />
          <path d="M8.500 32 19 19l3.800 4Z" fill="#f3f3f3" />
        </A>
      </App42>
      <App42 bg="linear-gradient(#12f65c,#05cb17)">
        <A>
          <defs><linearGradient id="ms" x1="0" y1="0" x2="0" y2="1"><stop stopColor="#fff" /><stop offset="1" stopColor="#c2f5c4" /></linearGradient></defs>
          <path d="M21 7.500c8.500 0 15 5.300 15 12.200S29.500 32 21 32c-1.500 0-3-.2-4.300-.5-1.500 1.400-3.500 2.600-6 2.900 1.300-1.200 2-2.700 2-4.400C8.500 27.700 6 24 6 19.700 6 12.800 12.500 7.500 21 7.500Z" fill="url(#ms)" />
        </A>
      </App42>
      <App42 bg="linear-gradient(#1b60f0,#11b8fc)">
        <A>
          <rect x="6.500" y="11" width="29.500" height="19.500" rx="2.500" fill="#e9ecef" />
          <path d="m7 12.500 11.700 10.300c1.500 1.300 3.500 1.300 5 0L35.500 12.500M7.500 29.500l9-8.500m18.500 8.500-9-8.500" stroke="#a1a8b2" strokeWidth="1" />
        </A>
      </App42>
      <App42 bg="#f4f2ea">
        <A>
          <path d="M0 0h10v10L0 7Z" fill="#3fd158" />
          <path d="M22 0h20v34L22 22Z" fill="#3fd158" />
          <path d="M26 0h16v16C33 15 27 9 26 0Z" fill="#fafafa" />
          <path d="M28.500 0H42v13.500C34 13 29 8 28.500 0Z" fill="#c9ccd0" />
          <path d="M32 0h10v9c-5 0-9-4-10-9Z" fill="#3fd158" />
          <path d="M0 17v25h13V30Z" fill="#f599c5" />
          <path d="M0 8v10l8 9 14 15h10L10 12Z" fill="#fafafa" />
          <path d="m22 20 20 13v9L22 28Z" fill="#fafafa" />
          <path d="M22 42l6-9 12 9Z" fill="#fbc90c" />
          <path d="M9.500 0h13v18h-13Z" fill="#fff" /><path d="M11.500 0H20v20h-8.500Z" fill="#1666ea" />
          <circle cx="15.500" cy="26" r="10" fill="#1a78f0" stroke="#fff" strokeWidth="1.800" />
          <path d="m15.500 19 5.300 13-5.300-3.300L10.200 32Z" fill="#fff" />
        </A>
      </App42>
      <App42 bg="#fefefe">
        <A>
          {PETALS.map((c, i) => (
            <rect key={i} x="16" y="2.500" width="10.500" height="17.500" rx="5.200" fill={c} opacity=".82" transform={`rotate(${i * 45} 21.2 21)`} />
          ))}
        </A>
      </App42>
      <App42 bg="linear-gradient(#12f65c,#05cb17)">
        <A>
          <defs><linearGradient id="ft" x1="0" y1="0" x2="0" y2="1"><stop stopColor="#fff" /><stop offset="1" stopColor="#c2f5c4" /></linearGradient></defs>
          <rect x="6" y="12" width="20.500" height="18" rx="4.500" fill="url(#ft)" />
          <path d="m28.500 18.500 5.800-4.700c.8-.6 1.700-.2 1.700.8v12.800c0 1-.9 1.400-1.700.8l-5.800-4.700Z" fill="url(#ft)" />
        </A>
      </App42>
      <div className="w-px shrink-0" />
      <App42 bg="#fafafa">
        <A>
          <rect width="42" height="13" fill="#fb4038" />
          <text x="21" y="10" textAnchor="middle" fontSize="8" fontWeight="700" fill="#fff">JUL</text>
          <text x="20.500" y="34.800" textAnchor="middle" fontSize="25" fontWeight="300" fill="#2b2b2b" textLength="20" lengthAdjust="spacingAndGlyphs">11</text>
        </A>
      </App42>
      <App42 bg="linear-gradient(#b58b46,#a06f2d)">
        <A>
          <rect width="3.500" height="42" fill="#8b6025" />
          <path d="M40 4h2v9h-2Z" fill="#c9c9c9" /><path d="M40 13h2v8h-2Z" fill="#3aa7ea" /><path d="M40 21h2v8h-2Z" fill="#f2951b" /><path d="M40 29h2v8h-2Z" fill="#3ac45c" />
          <circle cx="22" cy="21" r="13" stroke="#7d5822" strokeWidth="1.200" fill="#a87d3a" />
          <circle cx="22" cy="18" r="4.700" fill="#87602a" />
          <path d="M12.500 29.500c2-4.500 5.500-5.500 9.500-5.500s7.500 1 9.500 5.500A12.500 12.500 0 0 1 22 34a12.500 12.500 0 0 1-9.500-4.500Z" fill="#87602a" />
        </A>
      </App42>
      <App42 bg="#fefefe">
        <A>
          {["#1a7bf8", "#f92d28", "#f99a1c"].map((c, i) => (
            <g key={c}>
              <circle cx="8" cy={10.500 + i * 10.5} r="3.300" stroke={c} strokeWidth=".9" /><circle cx="8" cy={10.500 + i * 10.5} r="2.300" fill={c} />
              <path d={`M15.500 ${10.500 + i * 10.5}H37.500`} stroke="#cfcfcf" strokeWidth="1" />
            </g>
          ))}
        </A>
      </App42>
      <App42 bg="linear-gradient(#fafafa,#e6e2dd)">
        <A>
          <rect width="42" height="10.500" fill="#fdcb08" />
          <path d="M0 12.300h42" stroke="#b5b1a8" strokeWidth=".8" strokeDasharray="1 1" />
          <path d="M0 21.500h42M0 31.500h42" stroke="#cfcbc5" strokeWidth=".9" />
        </A>
      </App42>
      <App42 bg="linear-gradient(#253331,#0c1012)">
        <div className="flex h-full items-center justify-center gap-px pb-[1px] text-white">
          <FaApple size={15} />
          <span className="text-[18px] leading-none font-medium tracking-[-0.5px]">tv</span>
        </div>
      </App42>
      <App42 bg="linear-gradient(#fb4a66,#fb0a2c)">
        <A>
          <path d="M15.500 30V12.500L29.500 9.500V27" stroke="#fff" strokeWidth="2.600" />
          <path d="M14.200 10.800 30.800 7v5.500l-16.600 3.700Z" fill="#fff" />
          <ellipse cx="12.500" cy="30.500" rx="4.300" ry="3.700" fill="#fff" /><ellipse cx="26.700" cy="27.700" rx="4.300" ry="3.700" fill="#fff" />
        </A>
      </App42>
      <App42 bg="linear-gradient(#d83bf0,#8a0cc0)">
        <A>
          <g stroke="#fff" strokeWidth="1.800" strokeLinecap="round">
            <path d="M13.500 32.500a14.300 14.300 0 1 1 15 0" /><path d="M14.500 27.200a9.300 9.300 0 1 1 13 0" />
          </g>
          <circle cx="21" cy="18.300" r="3.500" fill="#fff" />
          <path d="M21 23.500c3 0 4 1.500 3.700 4l-.9 7c-.3 1.600-1.300 2.500-2.800 2.500s-2.500-.9-2.800-2.500l-.9-7c-.3-2.500.7-4 3.700-4Z" fill="#fff" />
        </A>
      </App42>
      <App42 bg="linear-gradient(#14b6fb,#1a60ec)">
        <A>
          <g stroke="#fff" strokeWidth="3.400" strokeLinecap="round">
            <path d="m23.500 9.500-10 17.300M18.500 9.500 31.800 32M7.500 26.500h17M31 26.500h3.500M11.300 30.500 10.500 32" />
          </g>
        </A>
      </App42>
      <App42 bg="#fefefe" dot badge="2">
        <A>
          <path d="M12 7h22v20H12Z" fill="#1b86d8" /><path d="M12 7h11v11H12Z" fill="#0f5eae" /><path d="M23 7h11v11H23Z" fill="#2ba0ea" />
          <path d="M9 19.500 22.500 27 35 19.500V33a1.500 1.500 0 0 1-1.500 1.500H10.500A1.500 1.500 0 0 1 9 33Z" fill="#2fb4f1" />
          <path d="m9 34 26-14.500V33a1.500 1.500 0 0 1-1.500 1.500Z" fill="#1b8fe0" />
          <rect x="3" y="13.500" width="15" height="15.500" rx="1.500" fill="#1069c4" />
          <text x="10.500" y="25" textAnchor="middle" fontSize="11" fontWeight="700" fill="#fff">O</text>
        </A>
      </App42>
      <App42 bg="linear-gradient(#cfe0ea,#8d8d8d)">
        <A>
          <circle cx="21" cy="21" r="18.500" fill="#3a3d40" />
          <circle cx="21" cy="21" r="15.700" stroke="#8c9094" strokeWidth="1.600" strokeDasharray="1 1" />
          <circle cx="21" cy="21" r="12.500" fill="#56595c" stroke="#b4b8bb" strokeWidth="2.200" />
          <path d="M21 21h12M21 21l-6-10.500M21 21l-6 10.500" stroke="#b4b8bb" strokeWidth="2" />
          <circle cx="21" cy="21" r="3.300" fill="#3a3d40" stroke="#b4b8bb" strokeWidth="1.600" />
        </A>
      </App42>
      <div className="mt-[9px] ml-[13px] mr-[11px] h-[49px] w-px shrink-0 bg-[#7a1fae]" />
      <App42 bg="#fefefe" dot>
        <OfficeTile letter="X" dark="#107c41" rows={[[0, 11, 12, "#21a366"], [0, 23, 12, "#33c481"], [1, 11, 12, "#107c41"], [1, 23, 12, "#21a366"], [2, 11, 12, "#185c37"], [2, 23, 12, "#107c41"], [3, 11, 24, "#185c37"]]} />
      </App42>
      <App42 bg="#b90a04" dot>
        <A><path d={ACRO} transform="translate(8.500 8.500) scale(1.060)" fill="#fff" stroke="#fff" strokeWidth=".5" /></A>
      </App42>
      <div className="w-px shrink-0" />
      <App42 bg="#fefefe" dot>
        <OfficeTile letter="W" dark="#185abd" rows={[[0, 11, 24, "#41a5ee"], [1, 11, 24, "#2b7cd3"], [2, 11, 24, "#185abd"], [3, 11, 24, "#103f91"]]} />
      </App42>
      <div className="mt-[9px] ml-[12px] mr-[12px] h-[49px] w-px shrink-0 bg-[#7a1fae]" />
      <div className="flex w-14 shrink-0 justify-center pt-[5px]">
        <svg width="36" height="51" viewBox="0 0 36 51" fill="none">
          <path d="M2 3 6 1h20l9 16v32H2Z" fill="#e2e2e2" />
          <path d="M1 3 4 2v47H1Z" fill="#333" />
          <path d="M5 3h20l10 14v32H5Z" fill="#f6f6f6" />
          <path d="M14 6h8M16 9h6M16 12h7M16 15h7M14 18h17M14 21h16M14 24h17M6 14h5M6 31h5M14 28h16M14 46h16" stroke="#9b9b9b" strokeWidth=".8" />
          <path d="M24 2c0 6-.5 11-.5 15 4 0 8 0 11.500 1Z" fill="#fff" stroke="#c4c4c4" strokeWidth=".6" />
          <path d="M14 31h12v12H14Z" fill="#a9a2a0" /><path d="M14 36h4v7h-4ZM20 34h3v9h-3Z" fill="#27262b" /><path d="M17 38h3v5h-3ZM23 38h3v5h-3Z" fill="#c02631" />
        </svg>
      </div>
      <div className="flex w-14 shrink-0 justify-center pt-[5px]">
        <svg width="40" height="50" viewBox="0 0 40 50" fill="none">
          <defs><linearGradient id="tr" x1="0" y1="0" x2="1" y2="0"><stop stopColor="#cfcbd6" /><stop offset=".4" stopColor="#f2f0f4" /><stop offset="1" stopColor="#c8c4cf" /></linearGradient></defs>
          <path d="M2 6 8 2l5 2 5-3 6 2 4-2 5 3 5 2-3 6H5Z" fill="#ececec" />
          <path d="m9 4 4 2-3 3ZM22 4l6-1 2 5-5 1ZM30 5l4 2-3 3Z" fill="#3b3440" /><path d="m14 5 4 1-2 3Z" fill="#12a9a0" /><path d="m24 5 3-1v4Z" fill="#bd6a38" />
          <path d="M2 7c10 5 26 5 36 0L33.500 44c-.4 3-5 5-13.500 5S6.900 47 6.500 44Z" fill="url(#tr)" />
          <path d="M2 7c10 5 26 5 36 0" stroke="#fff" strokeWidth="1.200" />
          <path d="m10 16 3 26M30 15l-3 27M18 20l6 10-8 9" stroke="#fff" strokeWidth="1.200" opacity=".5" />
        </svg>
      </div>
    </div>
  );
}

export default function App() {
  return (
    <div className="flex h-[900px] w-[1440px] flex-col overflow-hidden bg-[#400092] bg-[linear-gradient(90deg,#400092_0%,#2c0078_30%,#3c0098_45%,#5a00c4_65%,#5600cc_88%,#6a00ea_100%)] font-['Inter',sans-serif]">
      <MenuBar />
      <div className="-mb-5 h-[21px] shrink-0 bg-[linear-gradient(90deg,#b8009a_0%,#7a1850_22%,#5c4c66_40%,#6b4c66_75%,#b02a6c_99%,#168a5c_99.300%,#168a5c_100%)]" />
      <AcrobatWindow />
      <div className="h-[3px] shrink-0" />
      <Dock />
    </div>
  );
}
